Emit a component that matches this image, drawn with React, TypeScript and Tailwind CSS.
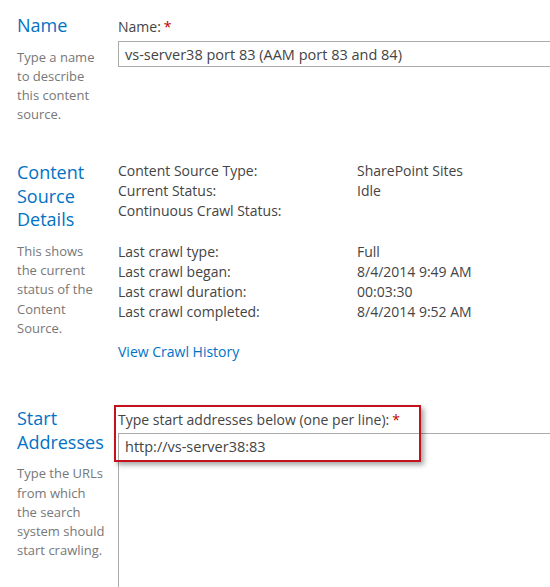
const LABEL = "text-[14px] leading-[20px] text-[#444444]";
const HEADING = "text-[18px] leading-[23.4px] text-[#0072c6]";
const DESC = "text-[13px] text-[#777777]";

type Row = { label: string; value?: string };

const STATUS_ROWS: Row[] = [
  { label: "Content Source Type:", value: "SharePoint Sites" },
  { label: "Current Status:", value: "Idle" },
  { label: "Continuous Crawl Status:" },
];

const CRAWL_ROWS: Row[] = [
  { label: "Last crawl type:", value: "Full" },
  { label: "Last crawl began:", value: "8/4/2014 9:49 AM" },
  { label: "Last crawl duration:", value: "00:03:30" },
  { label: "Last crawl completed:", value: "8/4/2014 9:52 AM" },
];

function Required() {
  return <span className="text-[#bf0000] ml-[3px]">*</span>;
}

function Rows({ rows }: { rows: Row[] }) {
  return (
    <div>
      {rows.map((r) => (
        <div key={r.label} className={`flex ${LABEL}`}>
          <span className="w-[239px] shrink-0 whitespace-nowrap">{r.label}</span>
          <span className="whitespace-nowrap">{r.value ?? ""}</span>
        </div>
      ))}
    </div>
  );
}

export default function App() {
  return (
    <div className="w-[550px] h-[587px] overflow-hidden bg-white font-['Open_Sans','Noto_Sans',sans-serif]">
      {/* Name */}
      <section className="flex items-start pt-[14px]">
        <div className="w-[118px] shrink-0 pl-[17px]">
          <h2 className={HEADING}>Name</h2>
          <p className={`${DESC} leading-[19px] mt-[10.7px]`}>
            Type a name
            <br />
            to describe
            <br />
            this content
            <br />
            source.
          </p>
        </div>
        <div className="w-[460px] shrink-0 pt-[3.3px]">
          <label className={`block ${LABEL}`}>
            Name:
            <Required />
          </label>
          <div className="mt-[3.4px] h-[26px] border border-[#ababab] pl-[6px] pt-[2px] text-[14.5px] leading-[22px] text-[#444444] whitespace-nowrap">
            vs-server38 port 83 (AAM port 83 and 84)
          </div>
        </div>
      </section>

      {/* Content Source Details */}
      <section className="flex items-start mt-[37px]">
        <div className="w-[118px] shrink-0 pl-[17px]">
          <h2 className={HEADING}>
            Content
            <br />
            Source
            <br />
            Details
          </h2>
          <p className={`${DESC} leading-[19.3px] mt-[10.5px]`}>
            This shows
            <br />
            the current
            <br />
            status of the
            <br />
            Content
            <br />
            Source.
          </p>
        </div>
        <div className="w-[432px] shrink-0">
          <Rows rows={STATUS_ROWS} />
          <div className="mt-[21px]">
            <Rows rows={CRAWL_ROWS} />
          </div>
          <a className={`block mt-[20px] ${LABEL} !text-[#0072c6]`} href="#">
            View Crawl History
          </a>
        </div>
      </section>

      {/* Start Addresses */}
      <section className="flex items-start mt-[45px]">
        <div className="w-[118px] shrink-0 pl-[17px]">
          <h2 className={HEADING}>
            Start
            <br />
            Addresses
          </h2>
          <p className={`${DESC} leading-[19.1px] mt-[10.5px]`}>
            Type the URLs
            <br />
            from which
            <br />
            the search
            <br />
            system should
            <br />
            start crawling.
          </p>
        </div>
        <div className="relative w-[460px] shrink-0 pt-[3px]">
          <label className={`block whitespace-nowrap ${LABEL}`}>
            Type start addresses below (one per line):
            <Required />
          </label>
          <div className="mt-[3px] h-[200px] border-l border-t border-[#ababab] pl-[6px] pt-[3.4px] text-[14.5px] leading-[20px] text-[#444444]">
            http://vs-server38:83
          </div>
          {/* callout drawn over the field */}
          <div className="absolute left-[-4px] top-[-2.5px] w-[307px] h-[57px] border-2 border-[#c4121c] shadow-[3px_3px_5px_rgba(0,0,0,0.35)] pointer-events-none" />
        </div>
      </section>
    </div>
  );
}
